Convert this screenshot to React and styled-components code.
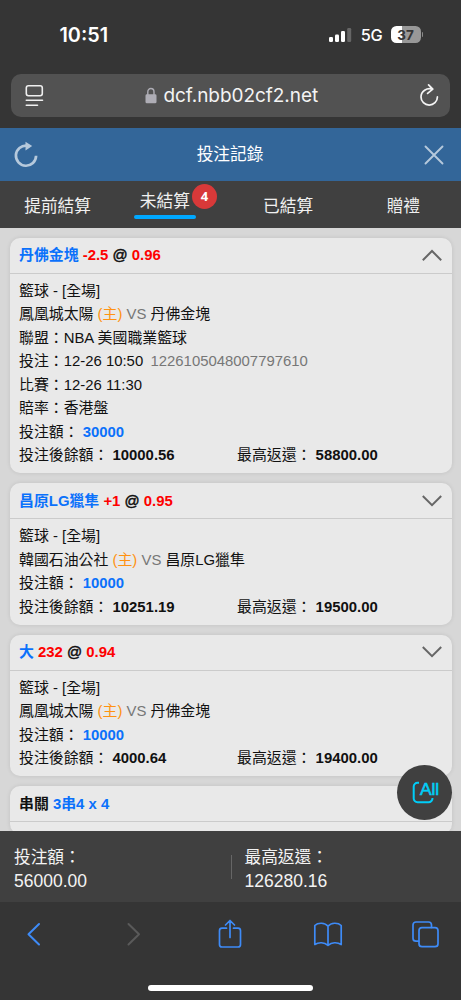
import React from "react";
import styled, { createGlobalStyle } from "styled-components";

const GlobalStyle = createGlobalStyle`
  * {
    box-sizing: border-box;
  }
  body {
    margin: 0;
    background: #353535;
    font-family: "Liberation Sans", "Noto Sans CJK TC", sans-serif;
  }
`;

const Screen = styled.div`
  display: flex;
  flex-direction: column;
  width: 461px;
  height: 1000px;
  overflow: hidden;
  background: #353535;
`;

const StatusBar = styled.div`
  display: flex;
  align-items: center;
  height: 74px;
  padding: 0 38px 5px 59.5px;
  color: #fff;
  font-family: Inter, sans-serif;
`;

const Clock = styled.div`
  flex: 1;
  font-size: 19.8px;
  font-weight: 600;
`;

const Network = styled.div`
  margin: 1px 8px 0 9px;
  font-size: 16.3px;
  font-weight: 500;
  letter-spacing: -0.3px;
`;

const Battery = styled.div`
  display: flex;
  align-items: center;
  justify-content: center;
  width: 30px;
  height: 17px;
  border-radius: 5.5px;
  background: linear-gradient(to right, #fff 38%, #989898 38%);
  color: #353535;
  font-size: 13.5px;
  font-weight: 700;
`;

const BatteryTip = styled.div`
  width: 1.5px;
  height: 5px;
  margin-left: 1px;
  border-radius: 0 2px 2px 0;
  background: #8a8a8a;
`;

const AddressBar = styled.div`
  display: flex;
  align-items: center;
  justify-content: space-between;
  flex: none;
  height: 43px;
  margin: 0 11px 11px;
  padding: 0 11px 0 14px;
  border-radius: 10px;
  background: #525252;
`;

const Address = styled.div`
  display: flex;
  align-items: center;
  gap: 6.5px;
  margin-right: 1px;
  color: #f4f4f4;
  font-family: Inter, sans-serif;
  font-size: 19px;
  line-height: 24px;
  letter-spacing: -0.05px;
`;

const TitleBar = styled.header`
  display: flex;
  align-items: center;
  justify-content: space-between;
  flex: none;
  height: 53px;
  padding: 0 17px 0 14px;
  background: #336699;
`;

const Title = styled.h1`
  margin: 0 2px 0 0;
  color: #fff;
  font-size: 16.7px;
  font-weight: 400;
  line-height: 24px;
`;

const Tabs = styled.nav`
  display: grid;
  grid-template-columns: repeat(4, 1fr);
  flex: none;
  height: 47px;
  background: #404040;
`;

const Tab = styled.div`
  display: flex;
  justify-content: center;
  align-items: ${(p) => (p.$active ? "flex-start" : "center")};
  padding: ${(p) => (p.$active ? "9px 16px 0 0" : "4px 0 0")};
  color: #f0f0f0;
  font-size: 16.7px;
  line-height: 24px;
`;

const TabLabel = styled.div`
  position: relative;
  display: flex;
  flex-direction: column;
  align-items: center;
  gap: 1px;
`;

const Underline = styled.div`
  width: 62px;
  height: 4px;
  border-radius: 2px;
  background: #00a8ff;
`;

const Badge = styled.span`
  position: absolute;
  top: -6px;
  left: 58px;
  width: 25px;
  height: 25px;
  border-radius: 50%;
  background: #d83939;
  color: #fff;
  font: 700 13px/25px "Noto Sans", sans-serif;
  text-align: center;
`;

const List = styled.main`
  display: flex;
  flex-direction: column;
  gap: 10px;
  flex: 1;
  min-height: 0;
  padding: 9.5px 9.5px 0;
  overflow: hidden;
  background: #d7d7d7;
`;

const Card = styled.section`
  flex: none;
  border-radius: 10px;
  background: #e9e9e9;
  box-shadow: 0 0 4px rgba(0, 0, 0, 0.1);
  color: #111;
  font-size: 14.9px;
`;

const CardHead = styled.div`
  display: flex;
  align-items: center;
  justify-content: space-between;
  height: 36px;
  padding: 0 9px 0 9.5px;
  border-bottom: 1px solid #cbcbcb;
  font-weight: 700;
`;

const Headline = styled.div`
  line-height: 24px;
`;

const At = styled.span`
  font-weight: 400;
  -webkit-text-stroke: 0.5px #111;
`;

const CardBody = styled.div`
  padding: 6px 9.5px 5.5px;
`;

const Line = styled.div`
  height: 23.5px;
  line-height: 23.5px;
  white-space: pre;
`;

const SplitLine = styled(Line)`
  display: flex;
`;

const Half = styled.div`
  flex: none;
  width: 218px;
`;

const Pick = styled.span`
  color: #0b71fb;
`;

const Odds = styled.span`
  color: #fe0000;
`;

const Home = styled.span`
  color: #ff9212;
`;

const Muted = styled.span`
  color: #777;
`;

const Ticket = styled(Muted)`
  margin-left: 7.3px;
`;

const Amount = styled.b`
  color: ${(p) => (p.$blue ? "#0b71fb" : "#111")};
`;

const Summary = styled.footer`
  position: relative;
  display: flex;
  align-items: center;
  flex: none;
  height: 71px;
  padding: 0 14px;
  background: #404040;
  color: #f3f3f3;
`;

const Total = styled.div`
  flex: none;
  width: 217px;
  padding-top: 6px;
  font-size: 16.7px;
  line-height: 24px;
`;

const TotalValue = styled.div`
  margin-top: -1px;
  font-size: 17.5px;
`;

const Divider = styled.div`
  flex: none;
  width: 1px;
  height: 24px;
  margin-right: 12.5px;
  background: #666;
`;

const AllButton = styled.div`
  position: absolute;
  top: -66px;
  right: 9px;
  display: flex;
  align-items: center;
  justify-content: center;
  width: 55px;
  height: 55px;
  border-radius: 50%;
  background: #404040;
`;

const Toolbar = styled.div`
  display: flex;
  flex-direction: column;
  align-items: center;
  justify-content: space-between;
  flex: none;
  height: 98px;
  padding: 16px 0 9px;
`;

const ToolRow = styled.div`
  display: flex;
  justify-content: space-between;
  width: 100%;
  padding: 0 20px 0 18px;
`;

const HomeIndicator = styled.div`
  width: 165px;
  height: 6px;
  border-radius: 3px;
  background: #fff;
`;

const bets = [
  {
    pick: "丹佛金塊",
    line: "-2.5",
    odds: "0.96",
    open: true,
    home: "鳳凰城太陽",
    away: "丹佛金塊",
    league: "NBA 美國職業籃球",
    placed: "12-26 10:50",
    ticket: "1226105048007797610",
    start: "12-26 11:30",
    market: "香港盤",
    stake: "30000",
    balance: "10000.56",
    payout: "58800.00",
  },
  {
    pick: "昌原LG獵隼",
    line: "+1",
    odds: "0.95",
    home: "韓國石油公社",
    away: "昌原LG獵隼",
    stake: "10000",
    balance: "10251.19",
    payout: "19500.00",
  },
  {
    pick: "大",
    line: "232",
    odds: "0.94",
    home: "鳳凰城太陽",
    away: "丹佛金塊",
    stake: "10000",
    balance: "4000.64",
    payout: "19400.00",
  },
];

const SignalIcon = () => (
  <svg width="24" height="16" viewBox="0 0 24 16" fill="#fff">
    <rect x="1" y="10" width="4" height="5" rx="1.2" />
    <rect x="7" y="7.5" width="4" height="7.5" rx="1.2" />
    <rect x="13" y="4" width="4" height="11" rx="1.2" />
    <rect x="19.2" y="1" width="4" height="14" rx="1.2" fill="#666" />
  </svg>
);

const ReaderIcon = () => (
  <svg width="20" height="24" viewBox="0 0 20 24" fill="none" stroke="#f0f0f0" strokeWidth="1.6" strokeLinecap="round">
    <rect x="1.3" y="1.8" width="16" height="10" rx="2.2" />
    <path d="M1.3 16.3H17.5M1.3 21.3H12.5" />
  </svg>
);

const LockIcon = () => (
  <svg width="12" height="18" viewBox="0 0 12 18">
    <path d="M2.8 8V5a3.1 3.5 0 0 1 6.2 0v3" fill="none" stroke="#aeadb5" strokeWidth="1.4" />
    <rect x="0.5" y="7.3" width="11" height="9" rx="1.4" fill="#aeadb5" />
  </svg>
);

const ReloadIcon = () => (
  <svg width="20" height="24" viewBox="0 0 20 24" fill="none" stroke="#f4f4f4" strokeWidth="1.7" strokeLinecap="round" strokeLinejoin="round">
    <path d="M13.6 5.1C7.8 3.3 2 7.3 2 12.9a8.2 8.2 0 0 0 16.4 0M9.6.9l4.2 4.2-5.2 4.3" />
  </svg>
);

const RefreshIcon = () => (
  <svg width="24" height="28" viewBox="0 0 24 28">
    <path d="M13 4.6A10.1 10.1 0 1 0 22.1 14.8" fill="none" stroke="#b6c9dc" strokeWidth="2.7" />
    <path d="M11.5.8 18.2 5l-6.7 4.6z" fill="#b6c9dc" />
  </svg>
);

const CloseIcon = () => (
  <svg width="20" height="20" viewBox="0 0 20 20" stroke="#b6c9dc" strokeWidth="1.9" strokeLinecap="round">
    <path d="M1.5 1.5l17 17M18.5 1.5l-17 17" />
  </svg>
);

const Caret = ({ up }) => (
  <svg width="22" height="14" viewBox="0 0 22 14" fill="none" stroke="#666" strokeWidth="2">
    <path d={up ? "M1.8 12.2 11 3l9.2 9.2" : "M1.8 2 11 11.2 20.2 2"} />
  </svg>
);

const AllIcon = () => (
  <svg width="28" height="26" viewBox="0 0 28 26">
    <path d="M8 2.8H6.5a3.8 3.8 0 0 0-3.8 3.8v11.8a3.8 3.8 0 0 0 3.8 3.8H17.5a4 4 0 0 0 4-4.2" fill="none" stroke="#00cdf8" strokeWidth="2" />
    <text x="8.9" y="14.8" fill="#00cdf8" stroke="#00cdf8" strokeWidth="0.6" fontSize="17.4" fontFamily="Liberation Sans">
      All
    </text>
  </svg>
);

const ToolIcon = ({ children, dim }) => (
  <svg width="32" height="32" viewBox="0 0 32 32" fill="none" stroke={dim ? "#5a5a5a" : "#3e8bf7"} strokeWidth="1.7" strokeLinecap="round" strokeLinejoin="round">
    {children}
  </svg>
);

const Bet = ({ bet }) => (
  <Card>
    <CardHead>
      <Headline>
        <Pick>{bet.pick}</Pick> <Odds>{bet.line}</Odds> <At>@</At> <Odds>{bet.odds}</Odds>
      </Headline>
      <Caret up={bet.open} />
    </CardHead>
    <CardBody>
      <Line>籃球 - [全場]</Line>
      <Line>
        {bet.home} <Home>(主)</Home> <Muted>VS</Muted> {bet.away}
      </Line>
      {bet.open && (
        <>
          <Line>聯盟：{bet.league}</Line>
          <Line>
            投注：{bet.placed}
            <Ticket>{bet.ticket}</Ticket>
          </Line>
          <Line>比賽：{bet.start}</Line>
          <Line>賠率：{bet.market}</Line>
        </>
      )}
      <Line>
        投注額： <Amount $blue>{bet.stake}</Amount>
      </Line>
      <SplitLine>
        <Half>
          投注後餘額： <Amount>{bet.balance}</Amount>
        </Half>
        <Half>
          最高返還： <Amount>{bet.payout}</Amount>
        </Half>
      </SplitLine>
    </CardBody>
  </Card>
);

export const App = () => {
  return (
    <Screen>
      <GlobalStyle />
      <StatusBar>
        <Clock>10:51</Clock>
        <SignalIcon />
        <Network>5G</Network>
        <Battery>37</Battery>
        <BatteryTip />
      </StatusBar>
      <AddressBar>
        <ReaderIcon />
        <Address>
          <LockIcon />
          dcf.nbb02cf2.net
        </Address>
        <ReloadIcon />
      </AddressBar>
      <TitleBar>
        <RefreshIcon />
        <Title>投注記錄</Title>
        <CloseIcon />
      </TitleBar>
      <Tabs>
        <Tab>提前結算</Tab>
        <Tab $active>
          <TabLabel>
            未結算
            <Underline />
            <Badge>4</Badge>
          </TabLabel>
        </Tab>
        <Tab>已結算</Tab>
        <Tab>贈禮</Tab>
      </Tabs>
      <List>
        {bets.map((bet) => (
          <Bet key={bet.pick} bet={bet} />
        ))}
        <Card>
          <CardHead>
            <Headline>
              串關 <Pick>3串4 x 4</Pick>
            </Headline>
          </CardHead>
          <CardBody />
        </Card>
      </List>
      <Summary>
        <Total>
          投注額：
          <TotalValue>56000.00</TotalValue>
        </Total>
        <Divider />
        <Total>
          最高返還：
          <TotalValue>126280.16</TotalValue>
        </Total>
        <AllButton>
          <AllIcon />
        </AllButton>
      </Summary>
      <Toolbar>
        <ToolRow>
          <ToolIcon>
            <path d="M21 6 10.5 16.3 21 26.5" strokeWidth="2" />
          </ToolIcon>
          <ToolIcon dim>
            <path d="M12.5 6 23 16.3 12.5 26.5" strokeWidth="2" />
          </ToolIcon>
          <ToolIcon>
            <path d="M12.5 10.2H8a2.5 2.5 0 0 0-2.5 2.5v13.8A2.5 2.5 0 0 0 8 29h16a2.5 2.5 0 0 0 2.5-2.5V12.7a2.5 2.5 0 0 0-2.5-2.5h-4.5M16 19.5V2.5M11.5 7 16 2.5 20.5 7" />
          </ToolIcon>
          <ToolIcon>
            <path d="M17 8.2c-3-3.8-10-3.8-13.2-.7v19c4-2.6 9.5-2.3 13.2.8 3.7-3.1 9.2-3.4 13.2-.8v-19C27 4.4 20 4.4 17 8.2zM17 8.2v19" />
          </ToolIcon>
          <ToolIcon>
            <path d="M9.5 23.2H7a3 3 0 0 1-3-3V7a3 3 0 0 1 3-3h12.500a3 3 0 0 1 3 3v2.500" />
            <rect x="10" y="9.7" width="19" height="19" rx="3" />
          </ToolIcon>
        </ToolRow>
        <HomeIndicator />
      </Toolbar>
    </Screen>
  );
};

export default App;
